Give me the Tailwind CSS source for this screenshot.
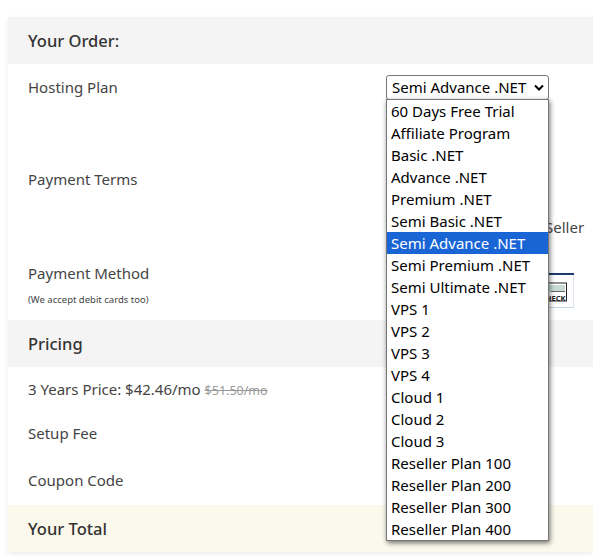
<!DOCTYPE html>
<html lang="en">
<head>
  <meta charset="UTF-8" />
  <title>Your Order</title>
  <script src="https://cdn.jsdelivr.net/npm/@tailwindcss/browser@4"></script>
</head>
<body class="bg-white h-[556px] overflow-hidden font-['Noto_Sans',sans-serif] text-[#444]">

  <div class="relative ml-2 mt-[17px] h-[535px] shadow-[0_2px_6px_rgba(0,0,0,0.08)]">

    <!-- Order -->
    <div class="h-[47px] bg-[#f4f4f4] pl-5 pt-[2px] flex items-center text-[16.5px] font-medium text-[#333]">Your Order:</div>
    <div class="h-[256px] pl-5 relative text-[15px]">
      <div class="pt-[13px] leading-[20px]">Hosting Plan</div>
      <div class="pt-[72px] leading-[20px]">Payment Terms</div>
      <div class="pt-[74px] leading-[20px]">Payment Method</div>
      <div class="text-[9.5px] leading-[12px] mt-[11px]">(We accept debit cards too)</div>
      <span class="absolute left-[537px] top-[153px] leading-[20px]">Seller</span>
      <svg class="absolute left-[538px] top-[209px]" width="29" height="36" viewBox="0 0 29 36">
        <rect x="0" y="0" width="28" height="36" fill="#fff"/>
        <rect x="0" y="0" width="28" height="2" fill="#1f3a6e"/>
        <rect x="0" y="34" width="28" height="1" fill="#c9d6e6"/>
        <rect x="27" y="2" width="1" height="32" fill="#dde6f0"/>
        <rect x="0" y="10" width="20.5" height="18" fill="#fff" stroke="#222"/>
        <rect x="0" y="12" width="19" height="7" fill="#c7dcd8"/>
        <rect x="5" y="18" width="14" height="1" fill="#666"/>
      </svg>
      <span class="absolute left-[533px] top-[230px] text-[7.5px] font-bold leading-[8px] text-[#222]">CHECK</span>
    </div>

    <!-- Pricing -->
    <div class="h-[47px] bg-[#f4f4f4] pl-5 pt-[2px] flex items-center text-[16.5px] font-medium text-[#333]">Pricing</div>
    <div class="h-[138px] pl-5 text-[15px]">
      <div class="pt-[12px] leading-[20px]">3 Years Price: $42.46/mo <span class="text-[12.5px] line-through text-[#999]">$51.50/mo</span></div>
      <div class="pt-[22px] leading-[20px]">Setup Fee</div>
      <div class="pt-[27px] leading-[20px]">Coupon Code</div>
    </div>

    <!-- Total -->
    <div class="h-[47px] bg-[#fbf8ec] pl-5 pt-[2px] flex items-center text-[16.5px] font-medium text-[#333]">Your Total</div>

    <!-- Open select -->
    <div class="absolute left-[378px] top-[58px] w-[163px] h-[25px] border border-[#767676] rounded-[3px] bg-white pl-[5px] flex items-center justify-between text-[15px] text-black">
      <span>Semi Advance .NET</span>
      <svg class="mr-[4px]" width="10" height="7" viewBox="0 0 10 7"><path d="M1 1.5 L5 5.5 L9 1.5" fill="none" stroke="#000" stroke-width="2"/></svg>
    </div>
    <ul class="absolute left-[378px] top-[82px] w-[163px] border border-[#767676] bg-white shadow-[1px_2px_5px_rgba(0,0,0,0.55)] text-[15px] leading-[22px] text-black">
      <li class="pl-[4px] h-[22px]">60 Days Free Trial</li>
      <li class="pl-[4px] h-[22px]">Affiliate Program</li>
      <li class="pl-[4px] h-[22px]">Basic .NET</li>
      <li class="pl-[4px] h-[22px]">Advance .NET</li>
      <li class="pl-[4px] h-[22px]">Premium .NET</li>
      <li class="pl-[4px] h-[22px]">Semi Basic .NET</li>
      <li class="pl-[4px] h-[22px] bg-[#1a65d6] text-white">Semi Advance .NET</li>
      <li class="pl-[4px] h-[22px]">Semi Premium .NET</li>
      <li class="pl-[4px] h-[22px]">Semi Ultimate .NET</li>
      <li class="pl-[4px] h-[22px]">VPS 1</li>
      <li class="pl-[4px] h-[22px]">VPS 2</li>
      <li class="pl-[4px] h-[22px]">VPS 3</li>
      <li class="pl-[4px] h-[22px]">VPS 4</li>
      <li class="pl-[4px] h-[22px]">Cloud 1</li>
      <li class="pl-[4px] h-[22px]">Cloud 2</li>
      <li class="pl-[4px] h-[22px]">Cloud 3</li>
      <li class="pl-[4px] h-[22px]">Reseller Plan 100</li>
      <li class="pl-[4px] h-[22px]">Reseller Plan 200</li>
      <li class="pl-[4px] h-[22px]">Reseller Plan 300</li>
      <li class="pl-[4px] h-[22px]">Reseller Plan 400</li>
    </ul>
  </div>

</body>
</html>
